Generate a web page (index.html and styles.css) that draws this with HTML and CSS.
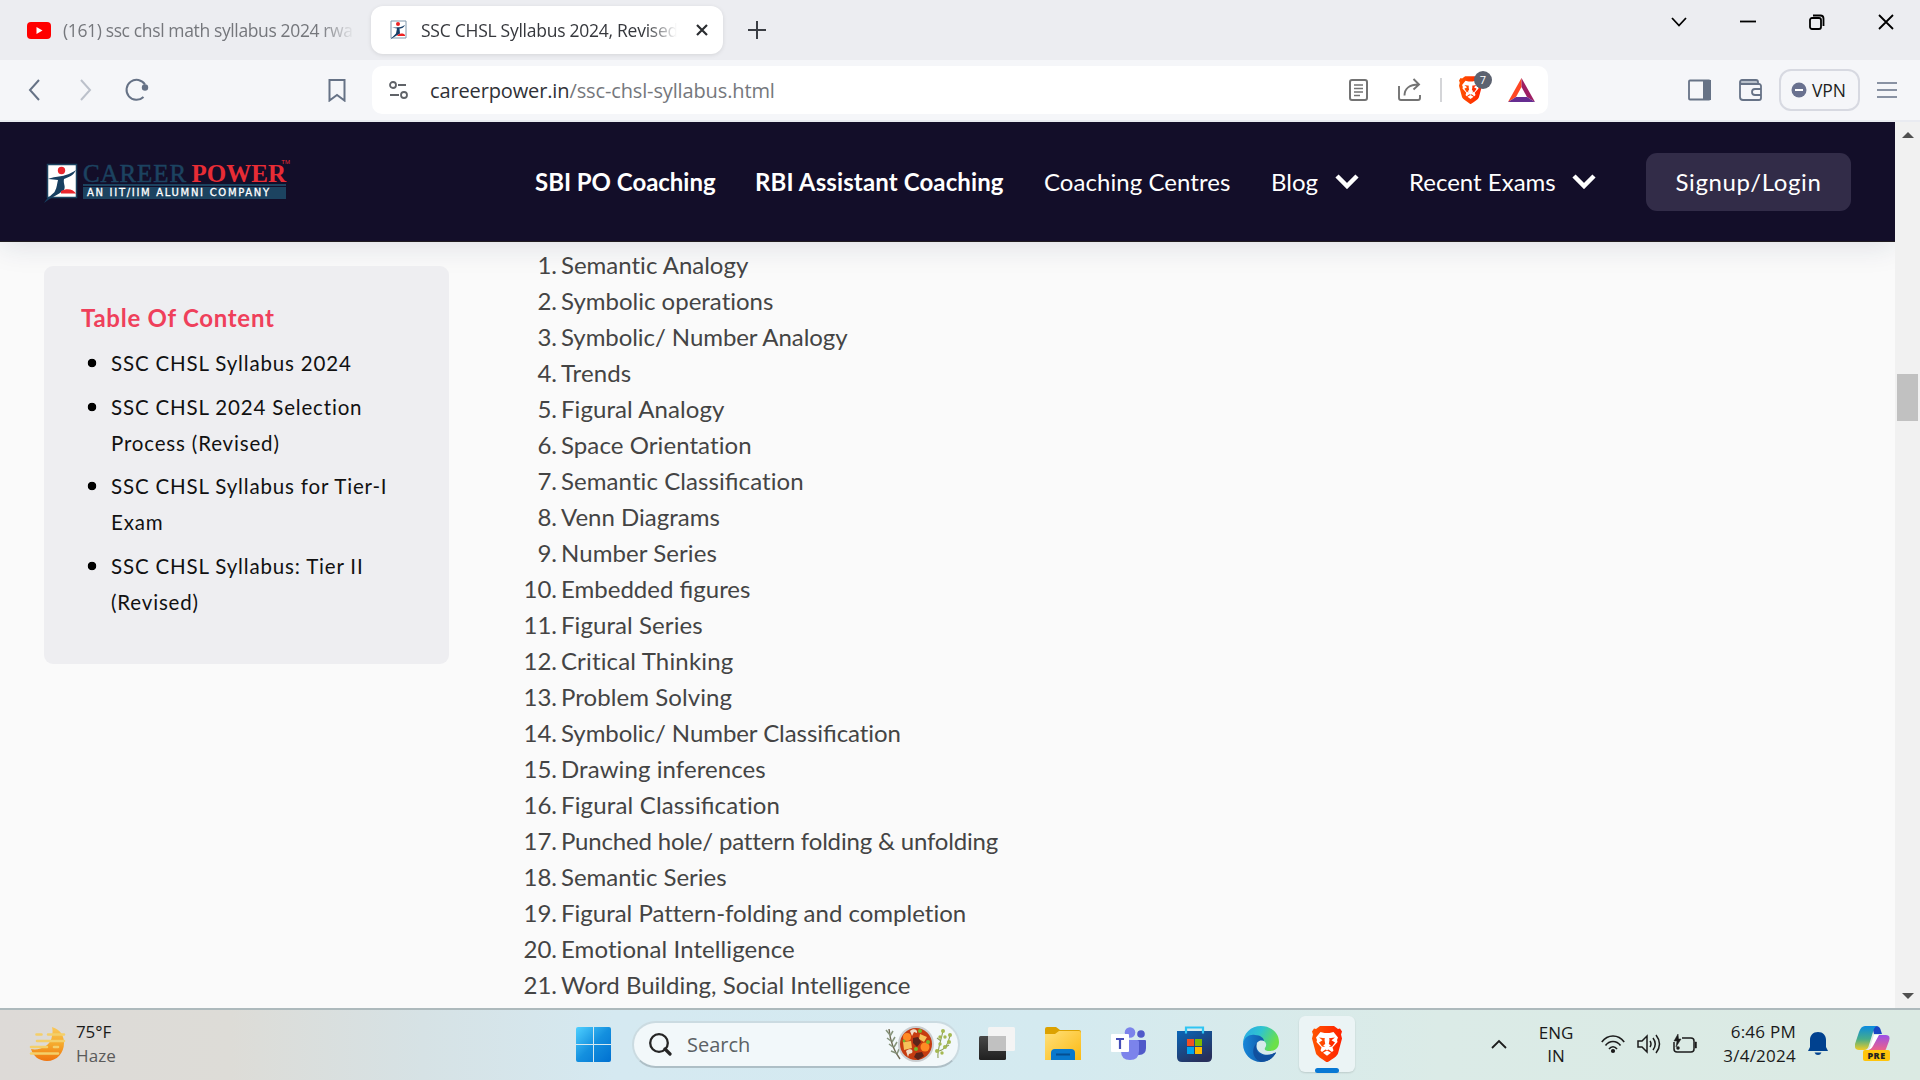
FILE: index.html
```html
<!DOCTYPE html>
<html lang="en">
<head>
<meta charset="utf-8">
<title>SSC CHSL Syllabus 2024, Revised</title>
<link rel="stylesheet" href="styles.css">
</head>
<body>
<svg width="0" height="0" class="defs">
  <defs>
    <symbol id="lion" viewBox="0 0 30 36">
      <path fill="url(#gLion)" d="M8 0h14l4 3 2-.500 2 3-1 3 1 4-4 15c-1 3-6 6-11 9C10 33 5 30 4 27.500L0 12.500l1-4-1-3 2-3L4 3z"/>
      <path fill="#fff" d="M8.500 6l4 1h5l4-1 4.500 5.500-1 2.500.5 2-5 5.500 1 3-1.500 1.500-3.500-2.500-1.500.7-1.500-.7-3.500 2.500L8.500 24.500l1-3-5-5.500.5-2-1-2.500z"/>
      <path fill="url(#gLion)" d="M7 11.500l6 .8-.5 1.400.7 4.300-2 1.500 2 1.500L10 20.500 7 16.500l3.500-2.200zM23 11.500l-6 .8.500 1.400-.7 4.300 2 1.500-2 1.500 3.200-.5 3-4-3.500-2.200z"/>
      <path fill="#fff" d="M15 24.500l4 2.300-4 3-4-3z"/>
    </symbol>
    <linearGradient id="gLion" x2="1"><stop stop-color="#ff5500"/><stop offset="1" stop-color="#ff2000"/></linearGradient>
    <linearGradient id="gSun" x2="0" y2="1"><stop stop-color="#f9c95c"/><stop offset=".5" stop-color="#f5a92c"/><stop offset="1" stop-color="#f0750f"/></linearGradient>
    <linearGradient id="gWin" x2="1" y2="1"><stop stop-color="#4fd0ff"/><stop offset=".5" stop-color="#1490df"/><stop offset="1" stop-color="#0070d0"/></linearGradient>
    <linearGradient id="gFold" x2="1" y2="1"><stop stop-color="#ffe07a"/><stop offset="1" stop-color="#fbb912"/></linearGradient>
    <linearGradient id="gStore" x2=".6" y2="1"><stop stop-color="#0a66b8"/><stop offset="1" stop-color="#28305c"/></linearGradient>
    <linearGradient id="gEdge" x2="1" y2=".4"><stop stop-color="#2aa5ea"/><stop offset=".5" stop-color="#2fc4cf"/><stop offset="1" stop-color="#6be04a"/></linearGradient>
    <linearGradient id="gDeep" x2="1"><stop stop-color="#1787d9"/><stop offset="1" stop-color="#0d3f8c"/></linearGradient>
    <linearGradient id="gView" x2="0" y2="1"><stop stop-color="#484848"/><stop offset="1" stop-color="#202020"/></linearGradient>
    <linearGradient id="gCopA" x2="0" y2="1"><stop stop-color="#0a8be0"/><stop offset=".55" stop-color="#47ad8a"/><stop offset="1" stop-color="#f2cc25"/></linearGradient>
    <linearGradient id="gCopB" x2="0" y2="1"><stop stop-color="#9a4fe8"/><stop offset="1" stop-color="#f8667c"/></linearGradient>
  </defs>
</svg>

<header class="tabs">
  <div class="tab tab-idle">
    <svg width="24" height="17" viewBox="0 0 24 17"><rect width="24" height="17" rx="4" fill="#f00"/><path d="M9.500 5v7l6-3.500z" fill="#fff"/></svg>
    <span class="tab-text idle-text">(161) ssc chsl math syllabus 2024 rwa</span>
  </div>
  <div class="tab tab-active">
    <svg width="18" height="20" viewBox="0 0 18 20"><path d="M2 1h15v17H2z" fill="#fff" stroke="#7f97ab"/><circle cx="9" cy="4" r="2" fill="#e22"/><path d="M3 7.500c6 0 9 0 13-2.500-2 3.500-4 3.500-5.500 3.500l.5 5-10 6 6-6 1-5z" fill="#153e67"/><path d="M8 16c2-3 6-3 8-1v1z" fill="#e22"/></svg>
    <span class="tab-text active-text">SSC CHSL Syllabus 2024, Revised</span>
    <svg class="tab-close" width="14" height="14" viewBox="0 0 14 14"><path d="M2 2l10 10M12 2L2 12" stroke="#2b2d31" stroke-width="2.200"/></svg>
  </div>
  <svg class="tab-new" width="18" height="18" viewBox="0 0 18 18"><path d="M9 0v18M0 9h18" stroke="#3b3e44" stroke-width="2"/></svg>
  <div class="window-controls">
    <svg width="16" height="16" viewBox="0 0 16 16"><path d="M1 4l7 7.500L15 4" /></svg>
    <svg width="16" height="16" viewBox="0 0 16 16"><path d="M0 7.500h16"/></svg>
    <svg width="16" height="16" viewBox="0 0 16 16"><rect x="1" y="4" width="11" height="11" rx="2"/><path d="M4 1.500h7.500a3 3 0 0 1 3 3V12"/></svg>
    <svg width="16" height="16" viewBox="0 0 16 16"><path d="M1 1l14 14M15 1L1 15"/></svg>
  </div>
</header>

<div class="toolbar">
  <div class="nav-buttons">
    <svg width="12" height="22" viewBox="0 0 12 22"><path d="M11 1L2 11l9 10" stroke="#667286"/></svg>
    <svg width="12" height="22" viewBox="0 0 12 22"><path d="M1 1l9 10-9 10" stroke="#bcc1cb"/></svg>
    <svg width="24" height="24" viewBox="0 0 24 24"><path d="M18.500 19A10 10 0 1 1 20 6.500" stroke="#667286"/><circle cx="20" cy="9.500" r="3.200" fill="#667286"/></svg>
  </div>
  <svg class="bookmark" width="18" height="24" viewBox="0 0 18 24"><path d="M1.500 2h15v20.500L9 17l-7.500 5.500z" fill="none" stroke="#667286" stroke-width="2"/></svg>
  <div class="address">
    <svg width="20" height="20" viewBox="0 0 20 20" fill="none" stroke="#606368" stroke-width="1.800"><circle cx="4" cy="5" r="3"/><path d="M9 5h8M1 15h9"/><circle cx="15" cy="15" r="3"/></svg>
    <span class="url"><b>careerpower.in</b>/ssc-chsl-syllabus.html</span>
    <svg width="20" height="24" viewBox="0 0 20 24" fill="none" stroke="#737373" stroke-width="2"><rect x="1" y="2" width="17" height="20" rx="2"/><path d="M5 7h9M5 10.500h9M5 14h9M5 17.500h6" stroke-width="1.600"/></svg>
    <svg class="share" width="24" height="24" viewBox="0 0 24 24" fill="none" stroke="#737373" stroke-width="1.900"><path d="M1 8v12a2 2 0 0 0 2 2h17a2 2 0 0 0 2-2v-3M6.500 17.500c0-7 5-11 14-11M15.500 1l5.500 5.500-5.500 5"/></svg>
    <i class="rule"></i>
    <div class="shield"><svg width="23" height="28"><use href="#lion"/></svg><span class="count">7</span></div>
    <svg class="bat" width="27" height="24" viewBox="0 0 27 24"><path d="M13.500 0L0 24l8-5 5.500-10z" fill="#ff4724"/><path d="M13.500 0L27 24l-8-5-5.500-10z" fill="#9e1f63"/><path d="M0 24h27l-8-5H8z" fill="#662d91"/></svg>
  </div>
  <svg class="side" width="23" height="22" viewBox="0 0 23 22"><rect x="1" y="1.500" width="21" height="19" rx="1" fill="none" stroke="#667286" stroke-width="1.800"/><path d="M15 1h8v20h-8z" fill="#667286"/></svg>
  <svg class="wallet" width="24" height="22" viewBox="0 0 24 22" fill="none" stroke="#667286" stroke-width="1.800"><path d="M2 2h16v3H2z" fill="#b8c0ca" stroke="none"/><path d="M1 3v15a3 3 0 0 0 3 3h16a2 2 0 0 0 2-2V7a2 2 0 0 0-2-2H3a2 2 0 0 1 0-4h14a2 2 0 0 1 2 2v2M22 10h-6a3 3 0 0 0 0 6h6"/></svg>
  <div class="vpn"><svg width="16" height="16" viewBox="0 0 16 16"><circle cx="8" cy="8" r="7.500" fill="#69718f"/><path d="M4 8h8" stroke="#fff" stroke-width="2"/></svg><span>VPN</span></div>
  <svg class="menu" width="20" height="18" viewBox="0 0 20 18"><path d="M0 2h20M0 9h20M0 16h20" stroke="#667286" stroke-width="1.600"/></svg>
</div>

<main class="viewport">
  <div class="page">
    <nav class="site-nav">
      <div class="logo">
        <svg width="36" height="42" viewBox="0 0 36 42"><path d="M3.500 3.500h29v33h-29z" fill="#fff" stroke="#1c4360" stroke-width="1.500"/><circle cx="17.500" cy="9.500" r="3.700" fill="#e8262d"/><path d="M4 18c12-4 16-1 28-9-3 6-7 7-12 9-1 5 2 7 0 11C14 34 6 37 0 42c3-6 10-9 11-12 2-4 2-7 3-11-3-.5-6-.5-10-1z" fill="#173f60"/><path d="M17 30c6-3 12-2 15 2.500H17z" fill="#e8262d"/></svg>
        <div class="logo-words">
          <div class="logo-name"><span class="career">CAREER</span><span class="power">POWER</span><span class="tm">TM</span></div>
          <div class="logo-tag">AN IIT/IIM ALUMNI COMPANY</div>
        </div>
      </div>
      <a class="n1 strong">SBI PO Coaching</a>
      <a class="n2 strong">RBI Assistant Coaching</a>
      <a class="n3">Coaching Centres</a>
      <a class="n4">Blog</a>
      <svg class="caret c1" width="24" height="15" viewBox="0 0 24 15"><path d="M2 2l10 10L22 2"/></svg>
      <a class="n5">Recent Exams</a>
      <svg class="caret" width="24" height="15" viewBox="0 0 24 15"><path d="M2 2l10 10L22 2"/></svg>
      <a class="signup">Signup/Login</a>
    </nav>
    <div class="content">
      <aside class="toc">
        <h2><span>Table Of Content</span></h2>
        <ul>
          <li>SSC CHSL Syllabus 2024</li>
          <li>SSC CHSL 2024 Selection<br>Process (Revised)</li>
          <li>SSC CHSL Syllabus for Tier-I<br>Exam</li>
          <li>SSC CHSL Syllabus: Tier II<br>(Revised)</li>
        </ul>
      </aside>
      <ol class="topics">
        <li><p>Semantic Analogy</p></li>
        <li><p>Symbolic operations</p></li>
        <li><p class="slash">Symbolic/ Number Analogy</p></li>
        <li><p class="wide">Trends</p></li>
        <li><p class="wide">Figural Analogy</p></li>
        <li><p class="wide">Space Orientation</p></li>
        <li><p class="wide">Semantic Classi<span class="lig">fi</span>cation</p></li>
        <li><p>Venn Diagrams</p></li>
        <li><p class="wide">Number Series</p></li>
        <li><p>Embedded <span class="lig">fi</span>gures</p></li>
        <li><p class="wide">Figural Series</p></li>
        <li><p class="wider">Critical Thinking</p></li>
        <li><p class="wide">Problem Solving</p></li>
        <li><p class="slash">Symbolic/ Number Classi<span class="lig">fi</span>cation</p></li>
        <li><p class="wide">Drawing inferences</p></li>
        <li><p class="wider">Figural Classi<span class="lig">fi</span>cation</p></li>
        <li><p class="snug">Punched hole/ pattern folding &amp; unfolding</p></li>
        <li><p>Semantic Series</p></li>
        <li><p>Figural Pattern-folding and completion</p></li>
        <li><p class="wide">Emotional Intelligence</p></li>
        <li><p>Word Building, Social Intelligence</p></li>
      </ol>
    </div>
  </div>
  <div class="scrollbar"><i class="up"></i><i class="thumb"></i><i class="down"></i></div>
</main>

<footer class="taskbar">
  <div class="weather">
    <svg width="37" height="36" viewBox="0 0 37 36"><path d="M23 0c9 3 12 9 12 16 0 10-7 18-17 18C10 34 4 29 2 22c8 2 20-3 21-13 .5-3 1-5 0-9z" fill="url(#gSun)"/><path d="M7.500 7.500h5M19 7.500h16M8 14h27M2 20h16M25 20h4M2 26.500h27" stroke="#f4cf6a" stroke-width="2.600" stroke-linecap="round"/></svg>
    <div><p>75°F</p><p class="dim">Haze</p></div>
  </div>
  <svg class="start" width="35" height="35" viewBox="0 0 35 35"><path d="M2 0h15v17H0V2q0-2 2-2zM18 0h15q2 0 2 2v15H18zM0 18h17v17H2q-2 0-2-2zM18 18h17v15q0 2-2 2H18z" fill="url(#gWin)"/></svg>
  <div class="search">
    <svg width="23" height="23" viewBox="0 0 23 23" fill="none" stroke="#252525"><circle cx="10" cy="10" r="8.800" stroke-width="2.300"/><path d="M16 16l5 5" stroke-width="3.200" stroke-linecap="round"/></svg>
    <span>Search</span>
    <svg class="stew" width="68" height="38" viewBox="0 0 68 38">
      <path d="M4 4c1 10 4 21 11 30" fill="none" stroke="#6f6a53" stroke-width="1.400"/><path d="M5 10L1 5M5 11l3-5M6 16l-4-3M7 17l3-5M8 22l-4-3M9 22l3-5M11 28l-5-2M12 29l2-5" stroke="#86947b" stroke-width="1.500"/>
      <circle cx="31" cy="19" r="18" fill="#c9cdd0"/><circle cx="31" cy="19" r="16" fill="#c63c10"/><g fill="#ff8a24"><circle cx="22" cy="12" r="4"/><circle cx="40" cy="22" r="4.500"/></g><g fill="#f7c25a"><path d="M18 17l8-1 1 7-8 2zM35 9l7 3-3 5-5-3z"/></g><g fill="#5d241a"><path d="M28 13l5-1 3 5-4 5-4-4zM31 28l6-1 2 4-6 4-4-3z"/></g><g fill="#f2dbc4"><path d="M25 6c3-3 8-2 7 2l-3-1-2 4zM21 26c3-3 8-2 6 2l-3 1-1 3z"/></g><g fill="#77b82a"><circle cx="35" cy="6" r="2"/><circle cx="43" cy="17" r="2"/><circle cx="31" cy="24" r="2"/><circle cx="19" cy="16" r="1.400"/></g>
      <path d="M53 33C52 23 57 14 58 5M54 26c8-2 9-9 11-15M56 16l-4-3M59 23l5-3" fill="none" stroke="#8c9d58" stroke-width="1.100"/><g fill="#a5b951"><circle cx="58" cy="6" r="2"/><circle cx="55" cy="12" r="1.700"/><circle cx="60" cy="12" r="1.700"/><circle cx="65" cy="10" r="2"/><circle cx="64" cy="17" r="2"/><circle cx="55" cy="19" r="1.700"/><circle cx="60" cy="22" r="2"/><circle cx="52" cy="26" r="2"/><circle cx="57" cy="28" r="1.700"/></g>
    </svg>
  </div>
  <div class="apps">
    <svg viewBox="0 0 36 36"><rect y="10" width="27" height="24" rx="1.500" fill="url(#gView)"/><rect x="9" y="1" width="27" height="24" rx="1.500" fill="#f4f4f4"/><path d="M9 10h18v15H10.500q-1.500 0-1.500-1.500z" fill="#c1c1c1"/></svg>
    <svg viewBox="0 0 36 36"><path d="M0 3q0-2 2-2h9l4 3h19q2 0 2 2v8H0z" fill="#dca100"/><path d="M0 8h10l4-3h20q2 0 2 2v27H0z" fill="url(#gFold)"/><path d="M6 34V27q0-4 4-4h16q4 0 4 4v7z" fill="#0878cc"/><path d="M11 28.500h14" stroke="#054f91" stroke-width="2"/></svg>
    <svg viewBox="0 0 36 36"><circle cx="19" cy="6.500" r="5.300" fill="#7b83eb"/><circle cx="30" cy="8" r="3.800" fill="#5059c9"/><path d="M25 14h9q1 0 1 1v7q0 7-7 7h-3z" fill="#5059c9"/><path d="M12 14h14q2 0 2 2v9q0 9-9 9t-9-9z" fill="#7b83eb"/><rect y="8" width="18" height="18" rx="1" fill="#fff"/><path d="M5 13h8M9 13v10" stroke="#464eb8" stroke-width="2.200"/></svg>
    <svg viewBox="0 0 36 36"><path d="M9 8V1.500h17V8" fill="none" stroke="#30c5f3" stroke-width="2.200"/><path d="M0 5h35v26q0 5-5 5H5q-5 0-5-5z" fill="url(#gStore)"/><path d="M9 4v3.500M26 4v3.500" stroke="#30c5f3" stroke-width="2.200"/><path d="M10 13h7v7h-7z" fill="#f25022"/><path d="M18 13h7v7h-7z" fill="#7fba00"/><path d="M10 21h7v7h-7z" fill="#00a4ef"/><path d="M18 21h7v7h-7z" fill="#ffb900"/></svg>
    <svg viewBox="0 0 36 36"><path d="M0 18C0 7 8 0 18 0s18 7 18 16c0 6-4 9-9 9-4 0-6-1-5-3 3-4 0-8-5-8C9 9 2 12 0 18z" fill="url(#gEdge)"/><path d="M0 18C1 11 7 8 12 9c5 0 9 3 9 6-6-2-9 3-7 8 3 6 12 8 19 3C30 33 24 36 18 36 8 36 0 28 0 18z" fill="url(#gDeep)"/><path d="M14 17c-3 7 3 15 13 12 3-1 5-3 6-2-3 5-8 9-15 9C9 33 8 22 14 17z" fill="#10509e"/></svg>
  </div>
  <div class="running"><svg width="30" height="36"><use href="#lion"/></svg><i></i></div>
  <div class="tray">
    <svg class="t-up" width="16" height="10" viewBox="0 0 16 10"><path d="M1 9l7-7 7 7" fill="none" stroke="#1c1c1c" stroke-width="1.800"/></svg>
    <div class="lang">ENG<br>IN</div>
    <svg class="t-wifi" width="24" height="20" viewBox="0 0 24 20" fill="none" stroke="#1c1c1c" stroke-width="1.600"><path d="M.8 8c6-8 16.400-8 22.400 0M4.500 11.500c4-5.300 11-5.300 15 0M8 15c2.300-3 5.700-3 8 0"/><circle cx="12" cy="17" r="1.300" fill="#1c1c1c"/></svg>
    <svg class="t-vol" width="24" height="20" viewBox="0 0 24 20" fill="none" stroke="#1c1c1c" stroke-width="1.500"><path d="M1 7v6h4l5 5V2L5 7zM13 7q2 3 0 6M16 4q4.500 6 0 12M19 1q7 9 0 18"/></svg>
    <svg class="t-bat" width="24" height="20" viewBox="0 0 24 20" fill="none" stroke="#1c1c1c" stroke-width="1.500"><path d="M9 4h9q3 0 3 3v8q0 3-3 3H4q-3 0-3-3V8"/><path d="M22 8h1.500v6H22zM5 0L1 7h3l-1 6 5-8H5.500z" fill="#1c1c1c" stroke-width=".5"/><circle cx="5" cy="14" r="1" fill="#1c1c1c"/></svg>
    <div class="clock">6:46 PM<br>3/4/2024</div>
    <svg class="t-bell" width="20" height="24" viewBox="0 0 20 24"><path d="M10 0c5 0 8 3.500 8 8v7l2 4H0l2-4V8c0-4.500 3-8 8-8zM6.500 20.500h7q-1 2.500-3.500 2.500t-3.500-2.500z" fill="#00418f"/></svg>
    <div class="copilot"><svg width="36" height="36" viewBox="0 0 36 36"><path d="M17 0h4q4 0 5 5l1 3h-8z" fill="#1a46c4"/><path d="M23 9h8q5 0 3 6l-3 8q-1 3-5 3H12z" fill="url(#gCopB)"/><path d="M10 0h12q-3 1-4 6l-4 13q-1 5-5 5H4q-5 0-4-6L4 6q2-6 6-6z" fill="url(#gCopA)"/><path d="M19 9h5l-6 11q-2 4-6 4 3-1 4-6z" fill="#fff"/></svg><span>PRE</span></div>
  </div>
</footer>
</body>
</html>
```
FILE: styles.css
```css
* { box-sizing: border-box; }
body { margin: 0; width: 1920px; height: 1080px; overflow: hidden; display: flex; flex-direction: column; font-family: "Open Sans", "Noto Sans", sans-serif; }
svg { display: block; flex: none; }
p, h2, ul, ol { margin: 0; padding: 0; }
.defs { position: absolute; }

.tabs { height: 60px; flex: none; background: #ecedf1; display: flex; align-items: center; font-size: 17.5px; }
.tab { height: 48px; display: flex; align-items: center; }
.tab-idle { width: 371px; padding-left: 27px; gap: 12px; color: #75777c; }
.tab-active { width: 352px; padding-left: 18px; background: #fff; border-radius: 12px; color: #36383d; box-shadow: 0 1px 4px #0000001a; }
.tab-text { overflow: hidden; white-space: nowrap; line-height: 24px; padding-bottom: 1px; }
.idle-text { width: 292px; letter-spacing: -.37px; -webkit-mask-image: linear-gradient(90deg, #000 88%, transparent); }
.active-text { width: 256px; margin-left: 14px; letter-spacing: -.26px; -webkit-mask-image: linear-gradient(90deg, #000 88%, transparent); }
.tab-close { margin-left: 18px; }
.tab-new { margin-left: 25px; }
.window-controls { margin: -17px 26px 0 auto; display: flex; gap: 53px; }
.window-controls svg { fill: none; stroke: #000; stroke-width: 1.8; }

.toolbar { height: 62px; flex: none; background: #f5f6f9; border-bottom: 2px solid #e9ebf1; display: flex; align-items: center; }
.nav-buttons { display: flex; align-items: center; width: 328px; padding-left: 28px; }
.nav-buttons svg { fill: none; stroke-width: 2; }
.nav-buttons svg:nth-child(2) { margin: 0 33px 0 40px; }
.bookmark { margin-right: 26px; }
.address { width: 1176px; height: 48px; border-radius: 10px; background: #fff; display: flex; align-items: center; padding-left: 17px; }
.url { margin-left: 21px; width: 919px; font-size: 20px; color: #75777c; letter-spacing: -.13px; }
.url b { font-weight: 400; color: #2f3136; }
.share { margin-left: 29px; }
.rule { width: 2px; height: 24px; background: #d4d5d8; margin: 0 17px 0 18px; }
.shield { position: relative; width: 23px; height: 28px; }
.count { position: absolute; left: 15px; top: -5px; width: 18px; height: 18px; border-radius: 50%; background: #5c6270; color: #fff; font-size: 11px; line-height: 18px; text-align: center; }
.bat { margin-left: 26px; }
.side { margin-left: 140px; }
.wallet { margin-left: 28px; }
.vpn { width: 81px; height: 42px; margin-left: 16px; border: 2px solid #d7d9e1; border-radius: 12px; display: flex; align-items: center; padding: 0 0 1px 10px; gap: 5px; font-size: 17.5px; letter-spacing: -.1px; color: #1c1e22; }
.menu { margin-left: 17px; }

.viewport { height: 886px; flex: none; display: flex; }
.page { width: 1895px; background: #fafafa; font-family: Lato, sans-serif; font-variant-ligatures: none; overflow: hidden; }
.site-nav { height: 120px; background: #130e29; border-bottom: 1px solid #211d22; box-shadow: 0 4px 28px #1b2a501f; display: flex; align-items: center; padding-left: 44px; color: #fff; font-size: 24px; white-space: nowrap; }
.site-nav a { line-height: 30px; }
.logo { width: 491px; display: flex; align-items: center; }
.logo svg { margin-top: 1px; }
.logo-words { width: 206px; margin: -3px 0 0 3px; }
.logo-name { height: 24px; width: 203px; border-bottom: 2px solid #1c4360; display: flex; font: bold 25px/24px "Liberation Serif", serif; position: relative; }
.career { color: #1c4360; width: 109px; font-weight: 400; letter-spacing: .9px; -webkit-text-stroke: .5px #1c4360; }
.power { color: #e82c35; letter-spacing: 0; }
.tm { position: absolute; right: -4px; top: -4px; font: 6px/8px "Liberation Sans", sans-serif; color: #e82c35; }
.logo-tag { margin-top: 1px; width: 203px; height: 12px; background: #1c4360; color: #fff; font: 10px/12px "DejaVu Sans", sans-serif; letter-spacing: 1.7px; padding-left: 4px; -webkit-text-stroke: .3px #fff; overflow: hidden; }
.strong { font-weight: 700; }
.n1 { width: 220px; letter-spacing: -.03px; }
.n2 { width: 289px; letter-spacing: .12px; }
.n3 { width: 227px; letter-spacing: .06px; }
.n4 { width: 64px; }
.caret { fill: none; stroke: #fff; stroke-width: 4.5; }
.c1 { margin-right: 50px; }
.n5 { width: 163px; }
.site-nav .signup { margin-left: 50px; width: 205px; height: 58px; line-height: 58px; text-align: center; border-radius: 11px; background: #322c48; letter-spacing: .6px; }
.content { display: flex; align-items: flex-start; }
.toc { margin: 24px 0 0 44px; width: 405px; height: 398px; background: #eeeef1; border-radius: 9px; padding: 34px 37px; }
.toc h2 { color: #ef405b; font-size: 24px; line-height: 36px; font-weight: 700; letter-spacing: .72px; }
.toc ul { list-style: none; margin-top: 9px; display: grid; gap: 7.7px; font-size: 20.5px; line-height: 36px; letter-spacing: .83px; }
.toc li { color: #111; padding-left: 30px; white-space: nowrap; background: radial-gradient(circle at 11px 18px, #000 4px, transparent 4.6px); }
.topics { list-style: none; counter-reset: n; margin: 5px 0 0 67px; color: #444; font-size: 24px; line-height: 36px; }
.topics li { counter-increment: n; display: flex; }
.topics li::before { content: counter(n) "."; width: 41px; margin-right: 4px; text-align: right; }
.topics .lig { font-variant-ligatures: common-ligatures; letter-spacing: 0; }
.topics .slash { letter-spacing: -.06px; }
.topics .snug { letter-spacing: -.18px; }
.topics .wide { letter-spacing: .08px; }
.topics .wider { letter-spacing: .16px; }
.scrollbar { width: 25px; background: #f1f1f1; display: flex; flex-direction: column; align-items: center; }
.up, .down { border: 6px solid transparent; }
.up { border-top: 0; border-bottom: 6px solid #505050; margin-top: 10px; }
.thumb { width: 21px; height: 47px; background: #c1c1c1; margin-top: 236px; }
.down { border-bottom: 0; border-top: 6px solid #505050; margin-top: auto; margin-bottom: 9px; }

.taskbar { height: 72px; flex: none; border-top: 2px solid #adb9bc; background: linear-gradient(90deg, #dddad7 0, #dddcd7 12%, #d6e2e5 22%, #d5e9f1 32%, #d4eaf0 55%, #dbebe7 75%, #dbeae3 100%); display: flex; align-items: center; padding-bottom: 2px; font-size: 17px; color: #1a1a1a; }
.weather { width: 576px; padding-left: 29px; display: flex; gap: 10px; line-height: 24px; }
.weather svg { margin-top: 7px; }
.weather p { letter-spacing: -.1px; }
.weather .dim { color: #5a5a5a; letter-spacing: .1px; }
.search { margin-left: 21px; width: 328px; height: 47px; border-radius: 24px; background: #f2f8fa; border: 2px solid #cbdbe1; border-bottom-color: #aebfc6; display: flex; align-items: center; padding-left: 15px; font-size: 20px; color: #5b6164; }
.search span { margin-left: 15px; width: 198px; }
.apps { display: flex; gap: 30px; margin-left: 19px; }
.apps svg { width: 36px; height: 36px; }
.running { position: relative; width: 56px; height: 56px; margin-left: 20px; border-radius: 6px; background: #ebf4f5; box-shadow: 0 1px 2px #0002; display: flex; align-items: center; justify-content: center; }
.running i { position: absolute; bottom: -1px; left: 16px; width: 24px; height: 5px; border-radius: 3px; background: #0878d4; }
.tray { display: flex; align-items: center; margin-left: 136px; line-height: 24px; }
.lang { width: 46px; margin-left: 26px; text-align: center; line-height: 23px; }
.t-wifi { margin-left: 22px; }
.t-vol, .t-bat { margin-left: 12px; }
.clock { width: 99px; text-align: right; letter-spacing: .25px; }
.t-bell { margin-left: 12px; }
.copilot { position: relative; margin-left: 27px; }
.copilot span { position: absolute; left: 8px; top: 24px; width: 27px; height: 11px; border-radius: 2px; background: #ffc50c; color: #222; font-size: 9px; font-weight: 800; line-height: 11px; letter-spacing: .5px; text-align: center; }
```
